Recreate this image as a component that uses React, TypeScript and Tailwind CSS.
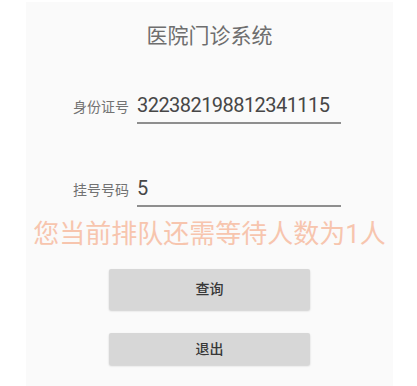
import React from "react";

const font = { fontFamily: 'Roboto, "Noto Sans CJK SC", sans-serif' };

function Field({ label, value }: { label: string; value: string }) {
  return (
    <div className="flex items-baseline pl-[47px]">
      <div className="w-[64px] shrink-0 text-[14px] text-[#727272]">{label}</div>
      <div className="w-[204px] border-b-2 border-[#8e8e8e] pb-[5px] text-[20px] leading-[24px] tracking-[-0.55px] text-[#474747]">
        {value}
      </div>
    </div>
  );
}

export default function App() {
  return (
    <div className="min-h-[386px] w-[417px] bg-white pt-[2px]" style={font}>
      <div className="ml-[26px] flex h-[384px] w-[367px] flex-col bg-[#fafafa]">
        <div className="mt-[24px] text-center text-[21px] leading-[21px] text-[#6e6e6e]">医院门诊系统</div>
        <div className="mt-[46px]">
          <Field label="身份证号" value="322382198812341115" />
        </div>
        <div className="mt-[52px]">
          <Field label="挂号号码" value="5" />
        </div>
        <div className="mt-[14px] text-center text-[26px] leading-[26px] text-[#f7c5ae]">
          您当前排队还需等待人数为1人
        </div>
        <button className="mx-auto mt-[22px] h-[41px] w-[201px] rounded-[2px] bg-[#d7d7d7] text-[14px] font-medium text-[#383838] shadow-[0_1px_2px_rgba(0,0,0,0.18)]">
          查询
        </button>
        <button className="mx-auto mt-[23px] h-[32px] w-[201px] rounded-[2px] bg-[#d7d7d7] text-[14px] font-medium text-[#383838] shadow-[0_1px_2px_rgba(0,0,0,0.18)]">
          退出
        </button>
      </div>
    </div>
  );
}
